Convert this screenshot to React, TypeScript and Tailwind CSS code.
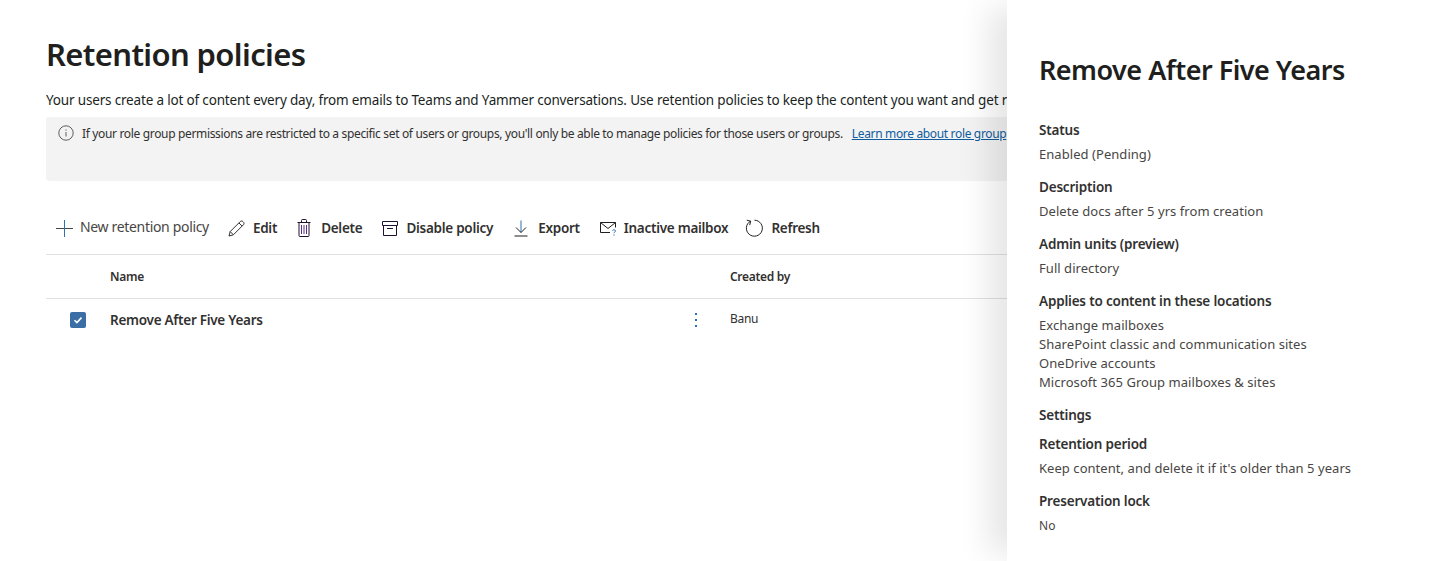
import React from "react";

const ToolButton = ({ icon, label, gap = "gap-[9px]" }: { icon: React.ReactNode; label: string; gap?: string }) => (
  <button className={`flex items-center ${gap} text-[13.5px] font-semibold text-[#323130] tracking-[-0.27px] whitespace-nowrap`}>
    {icon}
    <span>{label}</span>
  </button>
);

const Field = ({ title, lines, small }: { title: string; lines: string[]; small?: boolean }) => (
  <div className="mb-[13px] pt-[1px]">
    <div className="text-[13.5px] leading-[19px] font-semibold text-[#323130] tracking-[-0.19px]">{title}</div>
    <div className={`mt-[5px] leading-[19px] text-[#484644] tracking-[0.05px] ${small ? "text-[12px]" : "text-[13px]"}`}>
      {lines.map((l) => (
        <div key={l}>{l}</div>
      ))}
    </div>
  </div>
);

const PencilIcon = () => (
  <svg width="17" height="17" viewBox="0 0 17 17" fill="none" stroke="#323130" strokeWidth="1">
    <path d="M1 16l1.2-4.4L12.2 1.6c.8-.8 2-.8 2.8 0l.4.4c.8.8.8 2 0 2.8L5.4 14.8 1 16z" />
    <path d="M2.2 11.6l3.2 3.2M11 3l3 3" />
  </svg>
);

const TrashIcon = () => (
  <svg width="14" height="18" viewBox="0 0 14 18" fill="none" stroke="#1f1030" strokeWidth="1">
    <path d="M0.5 3.5h13M2 3.5v13a1 1 0 0 0 1 1h8a1 1 0 0 0 1-1v-13M4.5 3.5V1.5a1 1 0 0 1 1-1h3a1 1 0 0 1 1 1v2" />
    <path d="M4.5 6v9M7 6v9M9.5 6v9" stroke="#5c2d91" />
  </svg>
);

const ArchiveIcon = () => (
  <svg width="16" height="15" viewBox="0 0 16 15" fill="none" stroke="#1f1030" strokeWidth="1">
    <path d="M0.5 0.5h15v4h-15zM1.5 4.5v10h13v-10M5 7.5h6" />
  </svg>
);

const ExportIcon = () => (
  <svg width="14" height="17" viewBox="0 0 14 17" fill="none" stroke="#201f1e" strokeWidth="1">
    <path d="M7 0.5v12" stroke="#2f6fb5" />
    <path d="M2 7.5l5 5 5-5M0.5 16h13" />
  </svg>
);

const MailIcon = () => (
  <svg width="17" height="15" viewBox="0 0 17 15" fill="none" stroke="#201f1e" strokeWidth="1">
    <path d="M10 11.5H0.5v-10h15v5" />
    <path d="M0.5 1.5l7.5 6 7.5-6" />
    <path d="M12.5 9.5c.5-1 3-1 3 .5 0 1-1.5 1-1.5 2.2M14 13.4v1.2" stroke="#2f6fb5" />
  </svg>
);

const RefreshIcon = () => (
  <svg width="18" height="18" viewBox="0 0 18 18" fill="none" stroke="#201f1e" strokeWidth="1">
    <path d="M5.5 2.2a8 8 0 1 0 4-1" />
    <path d="M1.8 1.2l3.9 1-1 3.9" />
  </svg>
);

const App = () => {
  return (
    <div className="relative h-[561px] w-full overflow-hidden bg-white font-['Noto_Sans','Open_Sans',sans-serif]">
      <main className="pl-[46px] pt-[35px]">
        <h1 className="text-[31px] leading-[38px] font-semibold text-[#201f1e] tracking-[-0.63px]">Retention policies</h1>
        <p className="mt-[18px] text-[13.5px] leading-[19px] text-[#201f1e] tracking-[-0.17px] whitespace-nowrap">
          Your users create a lot of content every day, from emails to Teams and Yammer conversations. Use retention policies to keep the content you want and get rid of what you don't.
        </p>
        <div className="mt-[7px] flex h-[64px] items-start gap-[8px] rounded-[3px] bg-[#f3f3f3] pl-[12px] pt-[8px]">
          <svg width="16" height="16" viewBox="0 0 16 16" fill="none" className="shrink-0">
            <circle cx="8" cy="8" r="7.2" stroke="#605e5c" />
            <path d="M8 7v4.5M8 4.4v1.2" stroke="#605e5c" />
          </svg>
          <p className="text-[12px] leading-[18px] text-[#323130] tracking-[-0.34px] whitespace-nowrap">
            If your role group permissions are restricted to a specific set of users or groups, you'll only be able to manage policies for those users or groups.
            <a className="ml-[9px] text-[#0f5c9e] underline">Learn more about role group</a>
          </p>
        </div>
        <div className="mt-[36px] flex h-[22px] items-center pl-[10px]">
          <button className="mr-[19px] flex items-center gap-[7px] text-[14px] leading-[20px] text-[#484644] tracking-[-0.33px] whitespace-nowrap">
            <svg width="17" height="17" viewBox="0 0 17 17" fill="none">
              <path d="M0 8.5h17" stroke="#484644" />
              <path d="M8.5 0v17" stroke="#2f6fb5" />
            </svg>
            <span className="mt-[-2px]">New retention policy</span>
          </button>
          <div className="mr-[20px]"><ToolButton icon={<PencilIcon />} label="Edit" gap="gap-[8px]" /></div>
          <div className="mr-[20px]"><ToolButton icon={<TrashIcon />} label="Delete" gap="gap-[10px]" /></div>
          <div className="mr-[21px]"><ToolButton icon={<ArchiveIcon />} label="Disable policy" gap="gap-[8px]" /></div>
          <div className="mr-[20px]"><ToolButton icon={<ExportIcon />} label="Export" gap="gap-[10px]" /></div>
          <div className="mr-[17px]"><ToolButton icon={<MailIcon />} label="Inactive mailbox" gap="gap-[7px]" /></div>
          <ToolButton icon={<RefreshIcon />} label="Refresh" gap="gap-[8px]" />
        </div>
        <div className="mt-[15px] flex h-[45px] items-center border-y border-[#e1e1e1] text-[12px] font-semibold text-[#323130] tracking-[-0.3px]">
          <div className="w-[684px] pl-[64px]">Name</div>
          <div>Created by</div>
        </div>
        <div className="flex h-[43px] items-center">
          <span className="ml-[24px] mt-[-2px] flex h-[16px] w-[16px] items-center justify-center rounded-[2px] bg-[#3a6ea5]">
            <svg width="10" height="10" viewBox="0 0 10 10" fill="none">
              <path d="M1.5 5.2l2.4 2.4 4.6-5" stroke="#ffffff" strokeWidth="1.6" />
            </svg>
          </span>
          <div className="ml-[24px] w-[584px] text-[13.5px] font-semibold text-[#323130] tracking-[-0.27px]">Remove After Five Years</div>
          <svg width="4" height="16" viewBox="0 0 4 16" fill="#2f6fb5" className="mt-[-2px]">
            <rect x="1" y="1" width="2" height="2" />
            <rect x="1" y="7" width="2" height="2" />
            <rect x="1" y="13" width="2" height="2" />
          </svg>
          <div className="ml-[32px] mt-[-3px] text-[12px] text-[#323130] tracking-[-0.3px]">Banu</div>
        </div>
      </main>

      <aside className="absolute right-0 top-0 h-full w-[448px] bg-white pl-[32px] pt-[50px] shadow-[-26px_0_30px_-8px_rgba(0,0,0,0.1)]">
        <h2 className="mb-[30px] text-[27px] leading-[40px] font-semibold text-[#201f1e] tracking-[-0.52px]">Remove After Five Years</h2>
        <Field title="Status" lines={["Enabled (Pending)"]} />
        <Field title="Description" lines={["Delete docs after 5 yrs from creation"]} />
        <Field title="Admin units (preview)" lines={["Full directory"]} />
        <Field
          title="Applies to content in these locations"
          lines={[
            "Exchange mailboxes",
            "SharePoint classic and communication sites",
            "OneDrive accounts",
            "Microsoft 365 Group mailboxes & sites",
          ]}
        />
        <div className="mb-[9px] pt-[1px] text-[13.5px] leading-[19px] font-semibold text-[#323130] tracking-[-0.19px]">Settings</div>
        <Field title="Retention period" lines={["Keep content, and delete it if it's older than 5 years"]} />
        <Field title="Preservation lock" lines={["No"]} small />
      </aside>
    </div>
  );
};

export default App;
